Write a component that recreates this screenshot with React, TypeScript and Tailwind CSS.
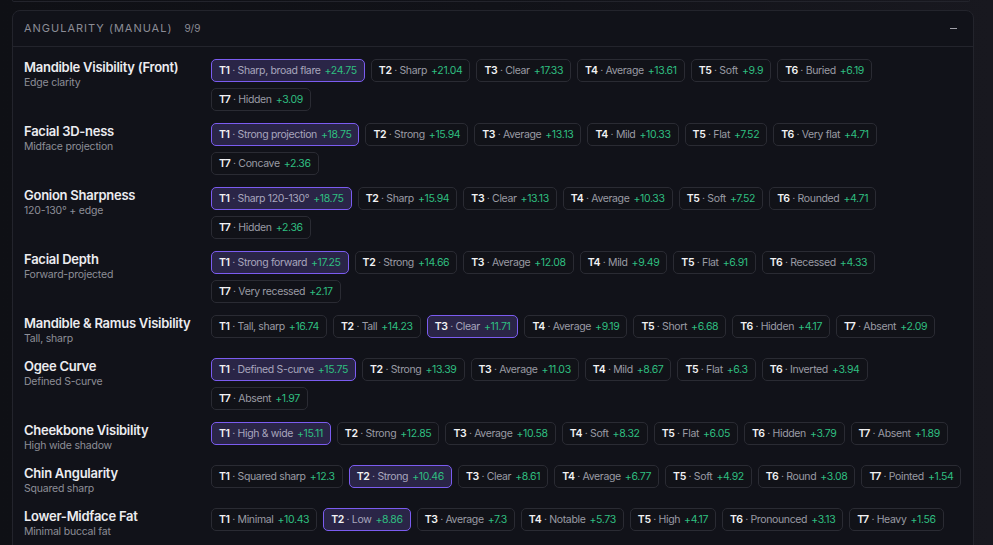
import React from 'react';

type Tier = { label: string; score: string };
type Trait = { name: string; hint: string; selected: number; tiers: Tier[] };

const t = (label: string, score: string): Tier => ({ label, score });

const TRAITS: Trait[] = [
  {
    name: 'Mandible Visibility (Front)', hint: 'Edge clarity', selected: 0,
    tiers: [t('Sharp, broad flare', '+24.75'), t('Sharp', '+21.04'), t('Clear', '+17.33'), t('Average', '+13.61'), t('Soft', '+9.9'), t('Buried', '+6.19'), t('Hidden', '+3.09')],
  },
  {
    name: 'Facial 3D-ness', hint: 'Midface projection', selected: 0,
    tiers: [t('Strong projection', '+18.75'), t('Strong', '+15.94'), t('Average', '+13.13'), t('Mild', '+10.33'), t('Flat', '+7.52'), t('Very flat', '+4.71'), t('Concave', '+2.36')],
  },
  {
    name: 'Gonion Sharpness', hint: '120-130° + edge', selected: 0,
    tiers: [t('Sharp 120-130°', '+18.75'), t('Sharp', '+15.94'), t('Clear', '+13.13'), t('Average', '+10.33'), t('Soft', '+7.52'), t('Rounded', '+4.71'), t('Hidden', '+2.36')],
  },
  {
    name: 'Facial Depth', hint: 'Forward-projected', selected: 0,
    tiers: [t('Strong forward', '+17.25'), t('Strong', '+14.66'), t('Average', '+12.08'), t('Mild', '+9.49'), t('Flat', '+6.91'), t('Recessed', '+4.33'), t('Very recessed', '+2.17')],
  },
  {
    name: 'Mandible & Ramus Visibility', hint: 'Tall, sharp', selected: 2,
    tiers: [t('Tall, sharp', '+16.74'), t('Tall', '+14.23'), t('Clear', '+11.71'), t('Average', '+9.19'), t('Short', '+6.68'), t('Hidden', '+4.17'), t('Absent', '+2.09')],
  },
  {
    name: 'Ogee Curve', hint: 'Defined S-curve', selected: 0,
    tiers: [t('Defined S-curve', '+15.75'), t('Strong', '+13.39'), t('Average', '+11.03'), t('Mild', '+8.67'), t('Flat', '+6.3'), t('Inverted', '+3.94'), t('Absent', '+1.97')],
  },
  {
    name: 'Cheekbone Visibility', hint: 'High wide shadow', selected: 0,
    tiers: [t('High & wide', '+15.11'), t('Strong', '+12.85'), t('Average', '+10.58'), t('Soft', '+8.32'), t('Flat', '+6.05'), t('Hidden', '+3.79'), t('Absent', '+1.89')],
  },
  {
    name: 'Chin Angularity', hint: 'Squared sharp', selected: 1,
    tiers: [t('Squared sharp', '+12.3'), t('Strong', '+10.46'), t('Clear', '+8.61'), t('Average', '+6.77'), t('Soft', '+4.92'), t('Round', '+3.08'), t('Pointed', '+1.54')],
  },
  {
    name: 'Lower-Midface Fat', hint: 'Minimal buccal fat', selected: 1,
    tiers: [t('Minimal', '+10.43'), t('Low', '+8.86'), t('Average', '+7.3'), t('Notable', '+5.73'), t('High', '+4.17'), t('Pronounced', '+3.13'), t('Heavy', '+1.56')],
  },
];

const TierChip: React.FC<{ index: number; tier: Tier; active: boolean }> = ({ index, tier, active }) => (
  <button
    className={`flex items-center h-[23px] px-[7px] rounded-[5px] border text-[10.5px] tracking-[-0.034em] leading-4 whitespace-nowrap ${
      active ? 'bg-[#2a2547] border-[#7b5cf0]' : 'bg-[#111218] border-[#2a2b33]'
    }`}
  >
    <span className="font-semibold text-[#f2f2f4]">T{index + 1}</span>
    <span className={`${active ? 'text-[#a8a5bd]' : 'text-[#9a9ba4]'}`}>&nbsp;·&nbsp;{tier.label}</span>
    <span className="ml-1 text-[#2fbf80]">{tier.score}</span>
  </button>
);

const TraitRow: React.FC<{ trait: Trait }> = ({ trait }) => (
  <div className="flex items-start">
    <div className="w-[187px] shrink-0">
      <div className="text-[13px] tracking-[-0.02em] leading-4 font-semibold text-[#ececf0]">{trait.name}</div>
      <div className="text-[10.5px] tracking-[-0.02em] leading-[15px] text-[#8d8e97]">{trait.hint}</div>
    </div>
    <div className="flex flex-wrap gap-[6px] flex-1">
      {trait.tiers.map((tier, i) => (
        <TierChip key={i} index={i} tier={tier} active={i === trait.selected} />
      ))}
    </div>
  </div>
);

export default function App() {
  return (
    <div
      className="h-screen overflow-hidden bg-linear-to-r from-[#0f1015] via-[#111218] to-[#18181f]"
      style={{ fontFamily: 'Inter, "Noto Sans", sans-serif' }}
    >
      <div className="ml-3 mr-[23px] h-[2px] border-x border-b border-[#23242c] rounded-b-lg" />
      <div className="mt-2 ml-3 mr-[19px] rounded-lg border border-[#23242c] bg-[#111219]">
        <div className="flex items-center justify-between h-[36px] px-[11px] border-b border-[#23242c]">
          <div className="flex items-baseline">
            <span className="text-[11px] tracking-[0.09em] text-[#8b8c96]">ANGULARITY (MANUAL)</span>
            <span className="ml-3 text-[10px] text-[#8b8c96]">9/9</span>
          </div>
          <span className="w-[7px] h-[1.5px] bg-[#a0a0a8] mr-[5px]" />
        </div>
        <div className="flex flex-col gap-3 px-[11px] pt-3 pb-4">
          {TRAITS.map(trait => (
            <TraitRow key={trait.name} trait={trait} />
          ))}
        </div>
      </div>
    </div>
  );
}
